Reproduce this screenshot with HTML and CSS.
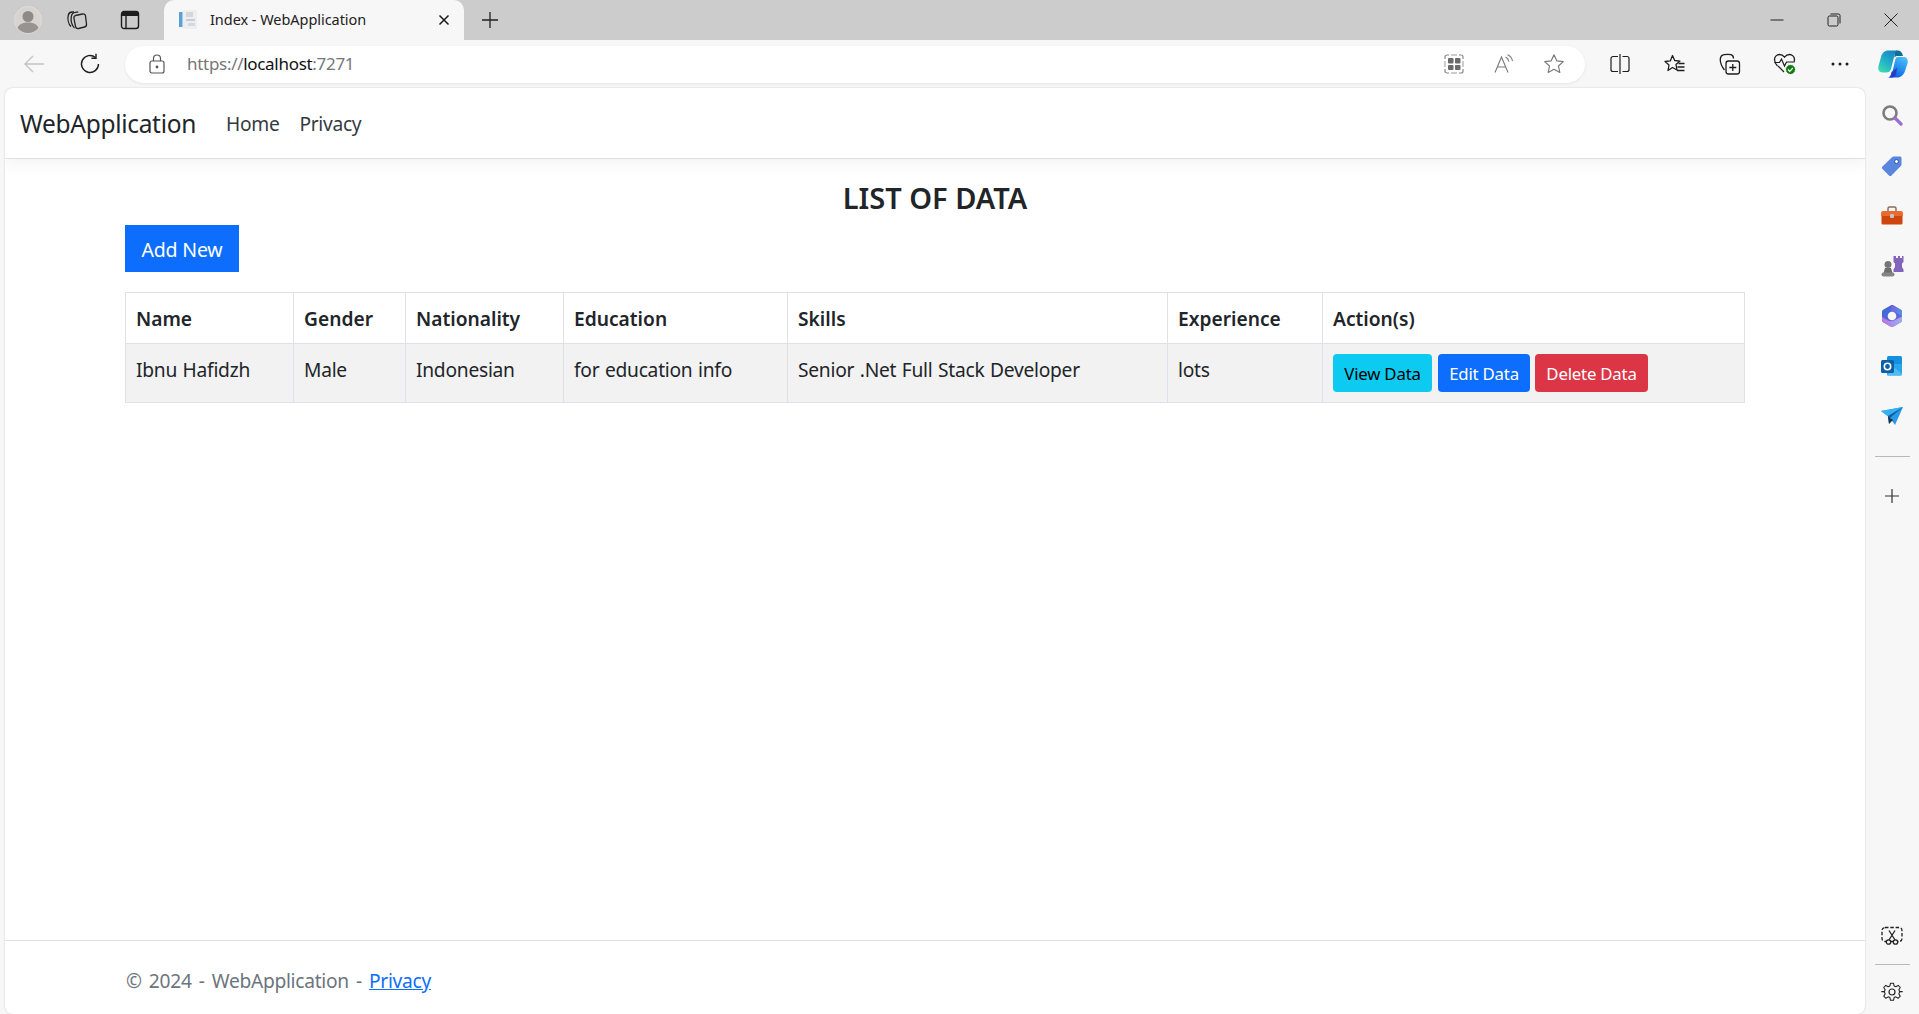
FILE: index.html
```html
<!DOCTYPE html>
<html lang="en">
<head>
<meta charset="utf-8">
<title>Index - WebApplication</title>
<link rel="stylesheet" href="styles.css">
</head>
<body>
<div class="titlebar">
  <div class="tb-left">
    <span class="tl-btn avatar-btn"><svg width="28" height="28" viewBox="0 0 28 28"><circle cx="14" cy="14" r="13.500" fill="#d6d3d0" stroke="#dedcda"/><circle cx="14" cy="10.500" r="5.500" fill="#8e8a87"/><path d="M3.500 22c1.500-4 5.500-5.500 10.500-5.500s9 1.500 10.500 5.500a13.500 13.500 0 0 1-21 0z" fill="#97938f"/></svg></span>
    <span class="tl-btn"><svg width="22" height="22" viewBox="0 0 22 22" fill="none" stroke="#222" stroke-width="1.300"><path d="M10.500 6.500l7-1.500c1.500-.3 2.700.5 3 2l1 8c.2 1.500-.6 2.700-2 3l-6 1.500c-1.500.3-2.600-.5-3-2l-1.500-8c-.3-1.500 .1-2.600 1.500-3z" transform="translate(-1 0)"/><path d="M5 17.500C2.500 15 1.300 10 2.300 6 2.800 4 4.300 3 6.300 3H8"/><path d="M8.500 19C6 17 4.500 12 5.300 7.500 5.700 5 7.300 3.500 9.300 3.300l3-.5"/></svg></span>
    <span class="tl-btn"><svg width="20" height="20" viewBox="0 0 20 20" fill="none" stroke="#1c1c1c" stroke-width="1.400"><rect x="1.500" y="1.500" width="17" height="17" rx="2.500"/><path d="M2 4h16" stroke-width="4"/><path d="M6 5v13"/></svg></span>
  </div>
  <div class="tab">
    <svg class="favicon" width="22" height="22" viewBox="0 0 22 22"><rect x="1" y="3" width="3.500" height="15" fill="#5a9fd8"/><rect x="5" y="1" width="14" height="19" fill="#eceef1"/><rect x="8" y="3" width="7" height="5" fill="#d3d6da"/><rect x="8" y="10" width="9" height="2" fill="#c9ccd1"/><rect x="10" y="14" width="7" height="3" fill="#d5d8dc"/></svg>
    <span class="tab-title">Index - WebApplication</span>
    <svg class="tab-close" width="12" height="12" viewBox="0 0 12 12" stroke="#1a1a1a" stroke-width="1.500"><path d="M1.500 1.500l9 9M10.500 1.500l-9 9"/></svg>
  </div>
  <span class="new-tab"><svg width="18" height="18" viewBox="0 0 18 18" stroke="#222" stroke-width="1.300"><path d="M9 1v16M1 9h16"/></svg></span>
  <div class="win-controls">
    <span class="win-btn"><svg width="14" height="14" viewBox="0 0 14 14" stroke="#222" stroke-width="1"><path d="M0.500 7h13"/></svg></span>
    <span class="win-btn"><svg width="14" height="14" viewBox="0 0 14 14" fill="none" stroke="#222" stroke-width="1"><rect x="1" y="3" width="10" height="10" rx="1.500"/><path d="M3.500 1H11.500A1.500 1.500 0 0 1 13 2.500V10.500"/></svg></span>
    <span class="win-btn"><svg width="14" height="14" viewBox="0 0 14 14" stroke="#222" stroke-width="1"><path d="M.5.5l13 13M13.500.5l-13 13"/></svg></span>
  </div>
</div>

<div class="toolbar">
  <span class="nav-btn"><svg width="22" height="20" viewBox="0 0 22 20" fill="none" stroke="#c4c4c4" stroke-width="1.400"><path d="M21 10H2M10 2l-8 8 8 8"/></svg></span>
  <span class="nav-btn"><svg width="22" height="22" viewBox="0 0 22 22" fill="none" stroke="#1e1e1e" stroke-width="1.400"><path d="M19.500 11A8.500 8.500 0 1 1 16.500 4.500"/><path d="M17 .8v4.500h-4.500" /></svg></span>
  <div class="omnibox">
    <svg class="lock" width="16" height="20" viewBox="0 0 16 20" fill="none" stroke="#555" stroke-width="1.200"><rect x="1" y="7" width="14" height="12" rx="2"/><path d="M4.500 7V4.500a3.500 3.500 0 0 1 7 0V7"/><circle cx="8" cy="13" r=".8" fill="#555"/></svg>
    <span class="url"><span class="url-dim">https://</span>localhost<span class="url-dim">:7271</span></span>
    <span class="omni-icons">
      <span class="omni-btn"><svg width="20" height="20" viewBox="0 0 20 20" fill="none"><path d="M1 5V3a2 2 0 0 1 2-2h2M15 1h2a2 2 0 0 1 2 2v2M19 15v2a2 2 0 0 1-2 2h-2M5 19H3a2 2 0 0 1-2-2v-2" stroke="#888" stroke-width="1.200"/><path d="M7 1h6M7 19h6M1 7v6M19 7v6" stroke="#999" stroke-width="1"/><rect x="4" y="4" width="5.500" height="5.500" rx="1" fill="#6b6b6b"/><rect x="11" y="4" width="5.500" height="5.500" rx="1" fill="#6b6b6b"/><rect x="4" y="11" width="5.500" height="5" rx="1" fill="#6b6b6b"/><rect x="11" y="11" width="5.500" height="5" rx="1" fill="#6b6b6b"/></svg></span>
      <span class="omni-btn"><svg width="20" height="20" viewBox="0 0 20 20" fill="none" stroke="#7a7a7a" stroke-width="1.100"><path d="M1 18.500L7.500 3l6.500 15.500M3.300 13h8.500"/><path d="M11.500 3c1.800 .8 3 2.500 3.500 4.500M13.500 .8c2.500 1 4.500 3.500 5 6.200"/></svg></span>
      <span class="omni-btn"><svg width="22" height="22" viewBox="0 0 22 22" fill="none" stroke="#7a7a7a" stroke-width="1.200"><path d="M11 1.800l2.800 6 6.500.8-4.800 4.400 1.300 6.500-5.800-3.200-5.800 3.200 1.300-6.500L1.700 8.600l6.500-.8z" stroke-linejoin="round"/></svg></span>
    </span>
  </div>
  <div class="tool-right">
    <span class="tool-btn"><svg width="20" height="20" viewBox="0 0 20 20" fill="none" stroke="#1e1e1e" stroke-width="1.200"><path d="M8 2.500H3a2 2 0 0 0-2 2v11a2 2 0 0 0 2 2h5M12.500 2.500H17a2 2 0 0 1 2 2v11a2 2 0 0 1-2 2h-4.500M10 0v20"/></svg></span>
    <span class="tool-btn"><svg width="22" height="20" viewBox="0 0 22 20" fill="none" stroke="#1e1e1e" stroke-width="1.300"><path d="M8.500 1.500l2.200 5 5.300.6-4 3.500 1 5.400-4.500-2.500-4.500 3L5 11 1 7.500l5.300-.6z" stroke-linejoin="round"/><path d="M14.500 9.500h6M13.500 13h7M13 16.500h7.500"/></svg></span>
    <span class="tool-btn"><svg width="22" height="22" viewBox="0 0 22 22" fill="none" stroke="#1e1e1e" stroke-width="1.300"><rect x="7" y="8" width="13.500" height="13" rx="2.500"/><path d="M13.800 11v7M10.300 14.500h7"/><path d="M5.500 17C2.500 13 .8 8 1.500 5c.3-1.800 1.800-3 3.500-3.300 2-.4 5-.6 7 0 1.500.5 2.500 1.800 2.500 3.800"/></svg></span>
    <span class="tool-btn"><svg width="24" height="24" viewBox="0 0 24 24" fill="none"><path d="M4.500 14C2.500 12 1.500 10 1.500 7.500 1.500 4.500 4 2.500 6.500 2.500c2 0 3.700 1 5 2.700 1.300-1.700 3-2.700 5-2.700 2.500 0 5 2 5 5 0 1-.2 2-.7 3" stroke="#1e1e1e" stroke-width="1.300"/><path d="M1.500 10.500h5l2-3.500 3 7 2-4h7M5 14l6 6" stroke="#1e1e1e" stroke-width="1.200"/><circle cx="17.500" cy="17.500" r="5" fill="#107c10" stroke="#f7f7f7"/><path d="M15 17.500l1.800 1.800 3-3.300" stroke="#fff" stroke-width="1.200"/></svg></span>
    <span class="tool-btn"><svg width="18" height="4" viewBox="0 0 18 4" fill="#1e1e1e"><circle cx="2" cy="2" r="1.500"/><circle cx="9" cy="2" r="1.500"/><circle cx="16" cy="2" r="1.500"/></svg></span>
    <span class="copilot-btn"><svg width="30" height="28" viewBox="0 0 30 28"><defs><linearGradient id="cpa" x1="0" y1="1" x2=".7" y2="0"><stop offset="0" stop-color="#46e3a8"/><stop offset=".5" stop-color="#22b4c8"/><stop offset="1" stop-color="#1a86c4"/></linearGradient><linearGradient id="cpb" x1=".8" y1="0" x2=".2" y2="1"><stop offset="0" stop-color="#4cc0f8"/><stop offset=".6" stop-color="#1c84ec"/><stop offset="1" stop-color="#2048d8"/></linearGradient></defs><path d="M10.500 .5H19C17.500 1.500 17 3 16.500 5L13 19c-.7 2.500-2.500 3.500-5 3.500H4.500C1 22.500-.5 19.500 .5 16L3 7C4 3 6.500 .5 10.500 .5z" fill="url(#cpa)"/><path d="M18 .5h1.500c3 0 5 2 5.500 5.500h-5.500c-1.500 0-2.500 .5-3 2 0-3 .2-6 1.500-7.500z" fill="#0e6f94"/><path d="M19.500 7H26c3 0 4.500 3 3.500 6.500L27 21c-1.500 4-4 6.500-8 6.500H9c3 0 4.500-2 5.200-4.500L17 11c.5-2.500 1.200-4 2.500-4z" fill="url(#cpb)"/><path d="M13.500 22l5.500-4-1 6c-.5 2-2 3.500-4 3.500H11c1.500-1 2-3 2.500-5.500z" fill="#1c3fc4"/></svg></span>
  </div>
</div>

<div class="workspace">
  <div class="card">
    <nav class="navbar">
      <a class="brand">WebApplication</a>
      <a class="nav-link">Home</a>
      <a class="nav-link">Privacy</a>
    </nav>
    <main class="content">
      <h4 class="page-title">LIST OF DATA</h4>
      <a class="btn-add">Add New</a>
      <table class="data-table">
        <colgroup>
          <col class="c-name"><col class="c-gender"><col class="c-nat"><col class="c-edu"><col class="c-skills"><col class="c-exp"><col class="c-act">
        </colgroup>
        <thead>
          <tr><th>Name</th><th>Gender</th><th>Nationality</th><th>Education</th><th>Skills</th><th>Experience</th><th>Action(s)</th></tr>
        </thead>
        <tbody>
          <tr>
            <td>Ibnu Hafidzh</td><td>Male</td><td>Indonesian</td><td>for education info</td><td>Senior .Net Full Stack Developer</td><td>lots</td>
            <td class="actions"><div class="action-row"><a class="btn btn-view">View Data</a><a class="btn btn-edit">Edit Data</a><a class="btn btn-del">Delete Data</a></div></td>
          </tr>
        </tbody>
      </table>
    </main>
    <footer class="footer">
      <div class="footer-inner">© 2024 - WebApplication - <a class="footer-link">Privacy</a></div>
    </footer>
  </div>
  <aside class="sidebar">
    <span class="side-btn"><svg width="22" height="22" viewBox="0 0 22 22" fill="none"><circle cx="9" cy="9" r="6.500" stroke="#7d7d7d" stroke-width="2.600"/><path d="M14 14l6 6" stroke="#9a6fd0" stroke-width="3.200" stroke-linecap="round"/></svg></span>
    <span class="side-btn"><svg width="22" height="22" viewBox="0 0 22 22"><path d="M1.500 11.500L11 2.300c.5-.5 1-.7 1.700-.7H19c1 0 1.500.6 1.500 1.500v6.400c0 .6-.2 1.200-.7 1.600L10.500 20.500c-.8.800-1.800.8-2.500 0L1.500 14c-.7-.7-.7-1.800 0-2.500z" fill="#5a86e0"/><circle cx="15.500" cy="6.500" r="2" fill="#fff" stroke="#2f55b0"/></svg></span>
    <span class="side-btn"><svg width="24" height="22" viewBox="0 0 24 22"><path d="M8 6V3.500C8 2.500 8.700 2 9.500 2h5c.8 0 1.500.5 1.500 1.500V6" fill="none" stroke="#8a6d60" stroke-width="1.500"/><path d="M1 8c0-1 .8-2 2-2h18c1.200 0 2 1 2 2v3H1z" fill="#ea6a30"/><path d="M1.500 11h21v7c0 1-.8 1.500-1.500 1.500H3c-.8 0-1.500-.5-1.500-1.500z" fill="#cf4510"/><rect x="10" y="9" width="4" height="4" rx="1" fill="#c4c4c4"/></svg></span>
    <span class="side-btn"><svg width="24" height="24" viewBox="0 0 24 24"><circle cx="8" cy="10.500" r="3.500" fill="#767676"/><path d="M5 14h6l1.500 5h-9z" fill="#6e6e6e"/><rect x="1.500" y="18.500" width="13" height="4" rx="2" fill="#858585"/><path d="M14 2h2v2h2V2h2v2h2V2h1.500v6l-1.500 1.500V13l1.500 2.500V18H13.500v-2.500L15 13V9.500L13.500 8V2z" fill="#8364bd"/></svg></span>
    <span class="side-btn"><svg width="22" height="24" viewBox="0 0 22 24"><defs><linearGradient id="m3a" x1="0" y1="0" x2="1" y2="1"><stop offset="0" stop-color="#2f6fd8"/><stop offset="1" stop-color="#8a5ad8"/></linearGradient><linearGradient id="m3b" x1="0" y1="0" x2="1" y2="0"><stop offset="0" stop-color="#c070e0"/><stop offset="1" stop-color="#9ab0f0"/></linearGradient><linearGradient id="m3c" x1="0" y1="0" x2="1" y2="1"><stop offset="0" stop-color="#7a5ad8"/><stop offset="1" stop-color="#4aa0e8"/></linearGradient></defs><path d="M9.500 1.500c1-.6 2-.6 3 0l7 4c1 .6 1.500 1.500 1.500 2.500v8c0 1-.5 1.900-1.500 2.500l-7 4c-1 .6-2 .6-3 0l-7-4C1.500 17.900 1 17 1 16V8c0-1 .5-1.900 1.500-2.500z" fill="url(#m3a)"/><path d="M10 1.200c.7-.3 1.300-.3 2 .1l7.500 4.200c1 .6 1.500 1.500 1.500 2.500V12l-6-3.500C14 7.500 12 7 10 7.800z" fill="url(#m3c)"/><path d="M1 13l6 3.500c2 1 4 1 6 0l8-4V16c0 1-.5 1.900-1.500 2.500l-7 4c-1 .6-2 .6-3 0l-7-4C1.500 17.900 1 17 1 16z" fill="url(#m3b)"/><circle cx="11" cy="12" r="4.300" fill="#f7f7f7"/></svg></span>
    <span class="side-btn"><svg width="22" height="22" viewBox="0 0 22 22"><rect x="6" y="1" width="15" height="19" rx="1.500" fill="#1490df"/><path d="M6 9h15v10a1.500 1.500 0 0 1-1.500 1.500H7.500A1.500 1.500 0 0 1 6 19z" fill="#28a8ea"/><path d="M6 20l8-7 7 6v.5a1 1 0 0 1-1 1H7z" fill="#50bcf0"/><rect x="0" y="5" width="13" height="13" rx="1.500" fill="#0a5fa8"/><circle cx="6.500" cy="11.500" r="3.200" fill="none" stroke="#fff" stroke-width="1.600"/></svg></span>
    <span class="side-btn"><svg width="24" height="20" viewBox="0 0 24 20"><path d="M1 5l22-4-8 18-5-7z" fill="#2a9ae8"/><path d="M1 5l22-4L8 10z" fill="#36b2f0"/><path d="M8 10l15-9-13 11-1 6z" fill="#0f5fa8"/><path d="M8 10l1 8 4-4-3-2z" fill="#16324f"/></svg></span>
    <span class="side-sep"></span>
    <span class="side-plus"><svg width="16" height="16" viewBox="0 0 16 16" stroke="#333" stroke-width="1.200"><path d="M8 1v14M1 8h14"/></svg></span>
    <span class="side-bottom">
      <span class="side-snip"><svg width="22" height="20" viewBox="0 0 22 20" fill="none" stroke="#222" stroke-width="1.300"><rect x="1" y="1.500" width="20" height="14" rx="3" stroke-dasharray="3.500 1.800"/><path d="M8 4.500l6 9.500M14 4.500l-6 9.500"/><circle cx="7.500" cy="16" r="2.200" fill="#f7f7f7"/><circle cx="14.500" cy="16" r="2.200" fill="#f7f7f7"/></svg></span>
      <span class="side-sep side-sep-b"></span>
      <span class="side-gear"><svg width="22" height="22" viewBox="0 0 22 22" fill="none" stroke="#222" stroke-width="1.200"><circle cx="11" cy="11" r="3"/><path d="M9.300 1.300h3.400l.6 3 2 .9 2.600-1.600 2.300 2.400-1.600 2.500.8 2 3-.1v.2-.1l-3 .6-.8 2 1.600 2.600-2.400 2.300-2.500-1.600-2 .8-.6 3H9.300l-.6-3-2-.8-2.500 1.600-2.400-2.300 1.600-2.600-.8-2-3-.6v.1-.2l3 .1.800-2-1.600-2.500 2.300-2.400 2.600 1.600 2-.9z" transform="translate(1.100 1.100) scale(.9)" stroke-linejoin="round"/></svg></span>
    </span>
  </aside>
</div>
</body>
</html>
```
FILE: styles.css
```css
* { box-sizing: border-box; }
html, body { margin: 0; height: 100%; }
body {
  display: flex;
  flex-direction: column;
  height: 100vh;
  overflow: hidden;
  background: #f7f7f7;
  font-family: "Noto Sans", "Open Sans", sans-serif;
  color: #212529;
}
svg { display: block; }

.titlebar { height: 40px; flex: none; display: flex; align-items: stretch; background: #cccccc; }
.tb-left { display: flex; align-items: center; width: 164px; padding-left: 7px; }
.tl-btn { width: 46px; display: flex; justify-content: center; }
.avatar-btn { width: 42px; }
.tl-btn:nth-child(2) { width: 56px; }
.tl-btn:nth-child(3) { width: 50px; }
.tab {
  width: 300px;
  display: flex;
  align-items: center;
  background: #f7f7f7;
  border-radius: 10px 10px 0 0;
  padding-left: 14px;
  font-size: 14.500px;
  letter-spacing: -0.050px;
  color: #222;
}
.favicon { margin-right: 10px; }
.tab-title { flex: 1; padding-bottom: 2px; }
.tab-close { margin-right: 14px; }
.new-tab { width: 52px; display: flex; align-items: center; justify-content: center; }
.win-controls { margin-left: auto; display: flex; align-items: center; }
.win-btn { width: 57px; display: flex; justify-content: center; }

.toolbar { height: 48px; flex: none; display: flex; align-items: center; background: #f7f7f7; padding-left: 6px; }
.nav-btn { width: 56px; display: flex; justify-content: center; }
.omnibox {
  flex: 1;
  height: 37px;
  margin-left: 7px;
  border-radius: 19px;
  background: #fff;
  box-shadow: 0 1px 3px rgba(0,0,0,.08);
  display: flex;
  align-items: center;
  padding-left: 24px;
  padding-right: 6px;
  font-size: 17px;
  letter-spacing: -0.300px;
}
.lock { margin-right: 22px; }
.url { color: #111; padding-bottom: 2px; }
.url-dim { color: #767676; }
.omni-icons { margin-left: auto; display: flex; align-items: center; }
.omni-btn { width: 50px; display: flex; justify-content: center; }
.tool-right { display: flex; align-items: center; margin-left: 7px; }
.tool-btn { width: 55px; display: flex; justify-content: center; }
.copilot-btn { width: 52px; display: flex; justify-content: center; }

.workspace { flex: 1; min-height: 0; display: flex; padding-left: 5px; }
.card {
  flex: 1;
  min-width: 0;
  display: flex;
  flex-direction: column;
  background: #fff;
  border-radius: 8px;
  box-shadow: 0 0 2px rgba(0,0,0,.2);
  overflow: hidden;
}
.navbar {
  height: 71px;
  flex: none;
  display: flex;
  align-items: center;
  padding-left: 15px;
  border-bottom: 1px solid #dee2e6;
  box-shadow: 0 5px 15px rgba(0,0,0,.05);
}
.brand { font-size: 24.500px; letter-spacing: -0.300px; margin-right: 20px; color: #212529; }
.nav-link { font-size: 19.200px; letter-spacing: -0.300px; padding: 0 10px; color: #343a40; }

.content { flex: 1; width: 1620px; margin: 0 auto; }
.page-title { margin: 21px 0 9px; font-size: 29px; line-height: 36px; font-weight: 600; text-align: center; letter-spacing: 0; }
.btn-add {
  display: block;
  width: 114px;
  height: 47px;
  padding-top: 2px;
  line-height: 45px;
  text-align: center;
  background: #0d6efd;
  color: #fff;
  font-size: 19.500px;
  letter-spacing: -0.200px;
}
.data-table {
  width: 1619px;
  margin-top: 20px;
  border-collapse: collapse;
  table-layout: fixed;
  font-size: 19.200px;
  letter-spacing: -0.250px;
  word-spacing: 0.800px;
}
.c-name { width: 168px; }
.c-gender { width: 112px; }
.c-nat { width: 158px; }
.c-edu { width: 224px; }
.c-skills { width: 380px; }
.c-exp { width: 155px; }
.c-act { width: 422px; }
.data-table th, .data-table td {
  border: 1px solid #dee2e6;
  padding: 11px 10px 9px 10px;
  line-height: 30px;
  text-align: left;
  vertical-align: top;
}
.data-table th { font-weight: 600; letter-spacing: 0; }
.data-table td { background: #f2f2f2; height: 59px; }
.data-table td.actions { padding: 10px; }
.action-row { display: flex; }
.btn {
  display: block;
  height: 38px;
  padding-top: 1px;
  line-height: 37px;
  text-align: center;
  border-radius: 4px;
  font-size: 16.800px;
  letter-spacing: -0.200px;
  word-spacing: 0;
}
.btn-view { width: 99px; margin-right: 6px; background: #0dcaf0; color: #000; }
.btn-edit { width: 92px; margin-right: 5px; background: #0d6efd; color: #fff; }
.btn-del { width: 113px; background: #dc3545; color: #fff; }

.footer { height: 74px; flex: none; border-top: 1px solid #dee2e6; }
.footer-inner {
  width: 1620px;
  margin: 0 auto;
  padding-left: 1px;
  line-height: 79px;
  font-size: 19.200px;
  letter-spacing: -0.300px;
  word-spacing: 2.500px;
  color: #6c757d;
}
.footer-link { color: #0d6efd; text-decoration: underline; }

.sidebar { width: 54px; flex: none; display: flex; flex-direction: column; align-items: center; padding-top: 2px; }
.side-btn { height: 50px; flex: none; display: flex; align-items: center; justify-content: center; }
.side-btn:nth-child(n+2) { position: relative; top: 1px; }
.side-sep { width: 35px; height: 1px; background: #b9b9b9; flex: none; margin-top: 16px; }
.side-plus { margin-top: 31px; flex: none; }
.side-bottom { margin-top: auto; display: flex; flex-direction: column; align-items: center; padding-bottom: 11px; }
.side-snip { flex: none; }
.side-sep-b { margin-top: 18px; }
.side-gear { margin-top: 16px; }
```
